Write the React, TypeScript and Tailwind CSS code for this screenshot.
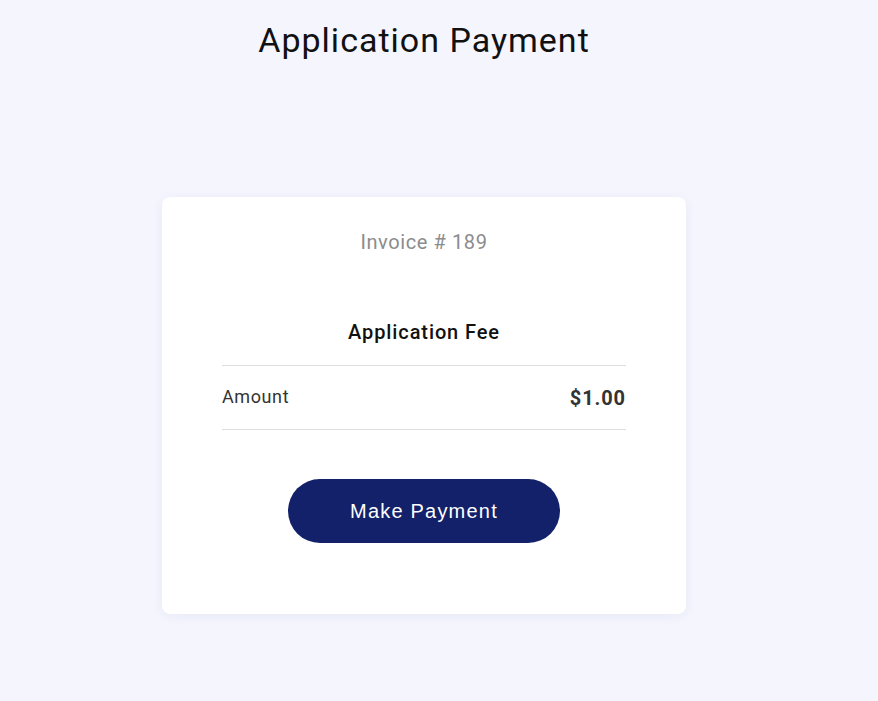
export default function App() {
  return (
    <div className="min-h-[701px] w-full bg-[#f4f5fd] font-['Roboto',sans-serif]">
      <div className="w-[848px]">
        <h1 className="pt-[20px] text-center text-[34px] leading-[40px] tracking-[1px] text-[#111111] font-normal">
          Application Payment
        </h1>
        <div className="mx-auto mt-[137px] w-[524px] rounded-[8px] bg-white px-[60px] pt-[31px] pb-[71px] shadow-[0_2px_12px_rgba(40,50,120,0.06)]">
          <div className="text-center text-[20px] leading-[28px] tracking-[0.6px] text-[#8c8c8c]">Invoice # 189</div>
          <div className="mt-[62px] pb-[19px] text-center text-[20px] leading-[28px] font-medium tracking-[0.9px] text-[#111111]">
            Application Fee
          </div>
          <div className="flex h-[65px] items-center justify-between border-y border-[#dedede]">
            <span className="-mt-[2px] text-[18px] leading-[24px] tracking-[0.6px] text-[#333333]">Amount</span>
            <span className="text-[20px] leading-[24px] font-bold text-[#333333] tracking-[0.9px]">$1.00</span>
          </div>
          <div className="mt-[49px] flex justify-center">
            <button className="h-[64px] w-[272px] rounded-full bg-[#12216a] font-['Liberation_Sans',Arial,sans-serif] text-[20px] tracking-[1.2px] text-white">
              Make Payment
            </button>
          </div>
        </div>
      </div>
    </div>
  );
}
